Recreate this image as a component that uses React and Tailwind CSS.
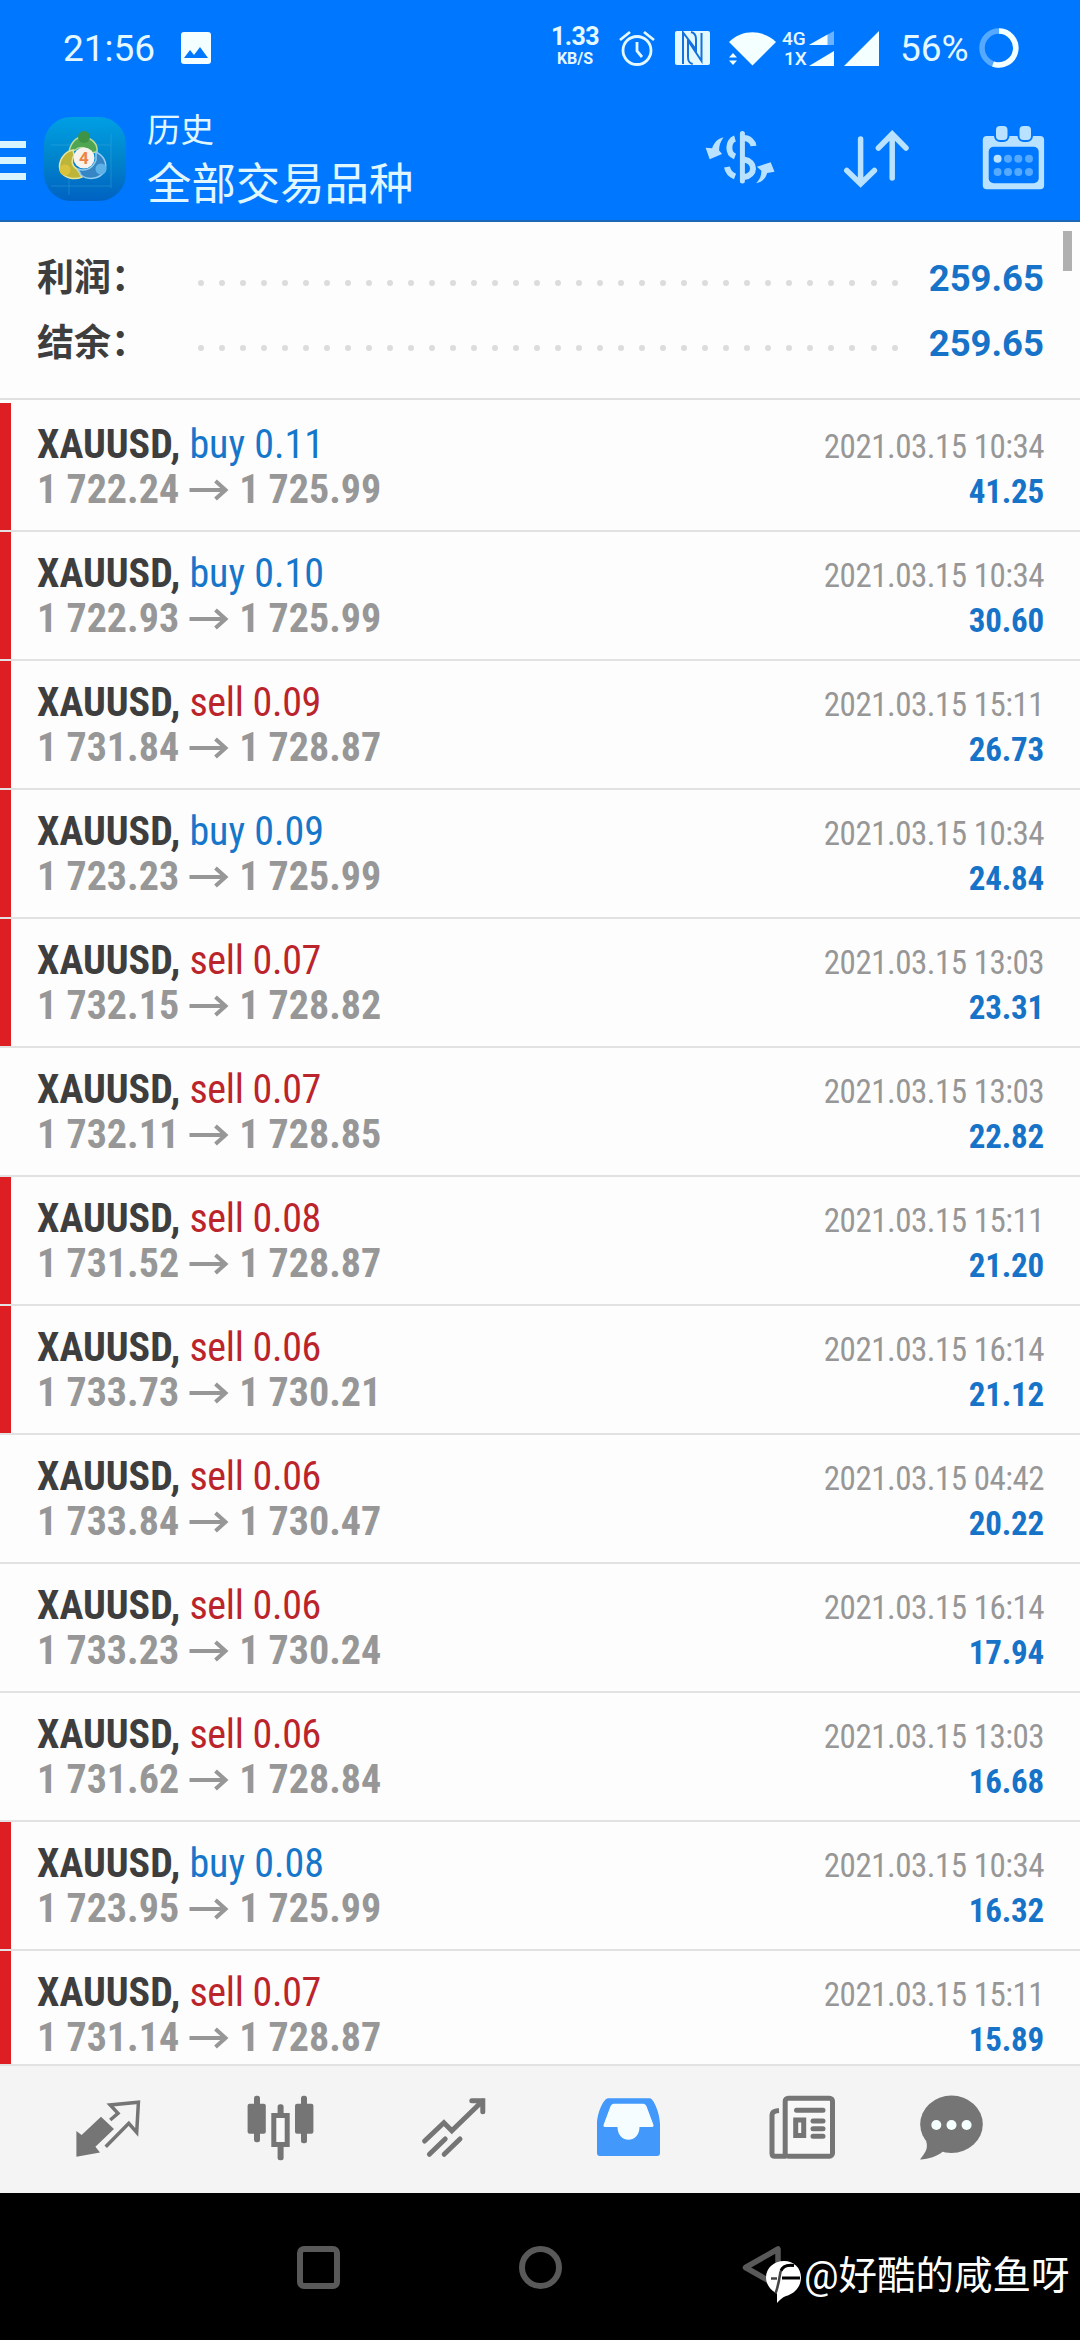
import React from 'react'

const deals = [
    { side: 'buy', volume: '0.11', open: '1 722.24', close: '1 725.99', time: '2021.03.15 10:34', profit: '41.25', marked: true },
    { side: 'buy', volume: '0.10', open: '1 722.93', close: '1 725.99', time: '2021.03.15 10:34', profit: '30.60', marked: true },
    { side: 'sell', volume: '0.09', open: '1 731.84', close: '1 728.87', time: '2021.03.15 15:11', profit: '26.73', marked: true },
    { side: 'buy', volume: '0.09', open: '1 723.23', close: '1 725.99', time: '2021.03.15 10:34', profit: '24.84', marked: true },
    { side: 'sell', volume: '0.07', open: '1 732.15', close: '1 728.82', time: '2021.03.15 13:03', profit: '23.31', marked: true },
    { side: 'sell', volume: '0.07', open: '1 732.11', close: '1 728.85', time: '2021.03.15 13:03', profit: '22.82', marked: false },
    { side: 'sell', volume: '0.08', open: '1 731.52', close: '1 728.87', time: '2021.03.15 15:11', profit: '21.20', marked: true },
    { side: 'sell', volume: '0.06', open: '1 733.73', close: '1 730.21', time: '2021.03.15 16:14', profit: '21.12', marked: true },
    { side: 'sell', volume: '0.06', open: '1 733.84', close: '1 730.47', time: '2021.03.15 04:42', profit: '20.22', marked: false },
    { side: 'sell', volume: '0.06', open: '1 733.23', close: '1 730.24', time: '2021.03.15 16:14', profit: '17.94', marked: false },
    { side: 'sell', volume: '0.06', open: '1 731.62', close: '1 728.84', time: '2021.03.15 13:03', profit: '16.68', marked: false },
    { side: 'buy', volume: '0.08', open: '1 723.95', close: '1 725.99', time: '2021.03.15 10:34', profit: '16.32', marked: true },
    { side: 'sell', volume: '0.07', open: '1 731.14', close: '1 728.87', time: '2021.03.15 15:11', profit: '15.89', marked: true },
]

const StatusBar = () => (
    <div className="flex h-24 items-center pl-[63px] text-[#e4f8ff]">
        <span className="w-[93px] text-[37px] leading-none whitespace-nowrap">21:56</span>
        <svg className="ml-[25px] h-8 w-[30px]" viewBox="0 0 30 32">
            <rect width="30" height="32" rx="3" fill="#f4ffff" />
            <path d="M3 26 9 18l4 5 6-8 8 11z" fill="#0077ff" />
        </svg>
        <div className="-mt-1 ml-[340px] flex w-[48px] flex-col items-center font-bold">
            <span className="text-[25px] leading-[26px] tracking-tight">1.33</span>
            <span className="text-[16px] leading-[18px]">KB/S</span>
        </div>
        <svg className="ml-5 h-9 w-9" viewBox="0 0 36 36" fill="none" stroke="currentColor" strokeWidth="2.8">
            <circle cx="18" cy="20.5" r="14" />
            <path d="M18 12v9l5 6M1 10l10-8M35 10 25 2" />
        </svg>
        <svg className="ml-5 h-[34px] w-[35px]" viewBox="0 0 35 34">
            <rect width="35" height="34" rx="2" fill="#e4f8ff" />
            <path d="M8 33V1.500l13 17V8c0-4-1-6-5-7M17.700 33c-4-1-4.700-3-4.700-7V9.500L26.500 30V2" fill="none" stroke="#1372dd" strokeWidth="2" />
        </svg>
        <svg className="ml-[19px] h-[35px] w-[47px]" viewBox="0 0 47 35" fill="#f4ffff">
            <path d="M0 11C13-2 34-2 47 11L23.500 34.500z" />
            <path d="M0 26.500 4 22l4 4.500zM0 29.500h8L4 34z" />
        </svg>
        <div className="ml-1.5 flex w-[52px] flex-col gap-[3px]">
            <div className="flex h-[17px] items-center">
                <span className="w-[27px] text-[19px] font-medium leading-none">4G</span>
                <svg className="h-[14px] w-[25px]" viewBox="0 0 25 14">
                    <path d="M0 14 25 0v14z" fill="#6bb2ff" />
                    <path d="M0 14 18.500 3.500V14z" fill="#f4ffff" />
                </svg>
            </div>
            <div className="flex h-[17px] items-center">
                <span className="w-[27px] pl-0.5 text-[19px] font-medium leading-none">1X</span>
                <svg className="h-[15px] w-[25px]" viewBox="0 0 25 15"><path d="M0 15 25 0v15z" fill="#f4ffff" /></svg>
            </div>
        </div>
        <svg className="ml-2.5 h-[35px] w-[35px]" viewBox="0 0 35 35"><path d="M0 35 35 0v35z" fill="#f4ffff" /></svg>
        <span className="ml-[21px] w-[68px] text-[37px] leading-none whitespace-nowrap">56%</span>
        <svg className="ml-[11px] h-10 w-10" viewBox="0 0 40 40" fill="none" strokeWidth="5.500">
            <circle cx="20" cy="20" r="17" stroke="#55aaff" />
            <path d="M20 3a17 17 0 1 1-6 33" stroke="#f4ffff" />
        </svg>
    </div>
)

const AppLogo = () => (
    <svg className="h-[86px] w-[84px]" viewBox="0 0 84 86">
        <defs>
            <linearGradient id="tile" x1="0" y1="0" x2="0" y2="1">
                <stop offset="0" stopColor="#009fe4" />
                <stop offset=".5" stopColor="#0084cc" />
                <stop offset="1" stopColor="#0062c2" />
            </linearGradient>
        </defs>
        <rect x="1" y="1" width="82" height="84" rx="27" fill="url(#tile)" />
        <path d="M8 29h60M26 45v34M8 70h60M68 18v54" stroke="#55b4e0" strokeWidth=".8" opacity=".4" />
        <path d="M26 36c2-12 10-16 15-15 8 1 14 7 13 15l-7 1c-3-6-10-7-15-3z" fill="#4fa552" stroke="#b9dc98" strokeWidth="1.500" />
        <path d="M30 34c-10 2-15 12-13 20 4 9 15 10 22 7l-5-8c-5-3-6-8-3-14z" fill="#bdb53a" stroke="#e6e29a" strokeWidth="1.500" />
        <path d="M53 36c8 4 11 11 9 19-6 9-18 9-24 4l-3-6c8 3 15-1 18-9z" fill="#3686c6" stroke="#92cbee" strokeWidth="1.500" />
        <circle cx="41" cy="21" r="6" fill="#3d9447" />
        <circle cx="22" cy="54" r="5.500" fill="#d9c33c" />
        <circle cx="58" cy="53" r="5.500" fill="#5fb2e8" />
        <circle cx="41" cy="42" r="10.500" fill="#f7f3ec" />
        <text x="41" y="48" textAnchor="middle" fontSize="17" fontWeight="700" fill="#ee8244">4</text>
    </svg>
)

const Header = () => (
    <header className="h-[222px] border-b-2 border-[#1b67b5] bg-[#0077ff]">
        <StatusBar />
        <div className="flex h-[124px] items-start">
            <div className="mt-[45px] flex w-[26px] flex-col gap-[9px]">
                <div className="h-[7px] bg-[#d8f4ff]" />
                <div className="h-[7px] bg-[#d8f4ff]" />
                <div className="h-[7px] bg-[#d8f4ff]" />
            </div>
            <div className="ml-[17px] mt-5"><AppLogo /></div>
            <div className="ml-5 mt-[15px] flex w-[554px] flex-col text-[#e0f7ff]">
                <span className="text-[33.500px] leading-[40px]">历史</span>
                <span className="mt-[5px] text-[44.400px] leading-[58px]">全部交易品种</span>
            </div>
            <svg className="mt-[30px] h-16 w-20 text-[#b8e2ff]" viewBox="0 0 80 64" fill="none" stroke="currentColor" strokeWidth="6">
                <path d="M41.400 7.500v47.500" strokeWidth="5" strokeLinecap="round" />
                <path d="M34 12.500c-7 2-8 15 0 18M43 12c5 0 9 4 9.500 8M43 33.500c12 2 12 16 0 17.500M26 41c1 5 4 8 8 9.500" />
                <path d="M4.600 21.700 8.700 33.300 21.100 28l-3-3.500c0-5 1.500-9 4.400-13.200-6 1.500-9 5-11.400 11z" fill="currentColor" stroke="none" />
                <path d="m73.500 45.700-3.800-9.400-13.800 4.400 4.500 4c0 5-1.500 8.500-5.200 12.600 6-1.500 9.500-5 11-10.300z" fill="currentColor" stroke="none" />
            </svg>
            <svg className="ml-[60px] mt-[30px] h-16 w-[70px] text-[#b8e2ff]" viewBox="0 0 70 64" fill="none" stroke="currentColor" strokeWidth="5.500" strokeLinecap="round">
                <path d="M19.600 13v44M5.800 44.500l13.800 13.500 13.800-13.500M51.200 52V9M37.400 22 51.200 8l13.800 14" />
            </svg>
            <svg className="ml-[70px] mt-7 h-[68px] w-[66px]" viewBox="0 0 66 68">
                <rect x="1.800" y="12" width="61.300" height="53.300" rx="4" fill="#b8e2ff" />
                <rect x="7.700" y="22.700" width="50" height="36.600" rx="5" fill="#0077ff" />
                <rect x="14" y="1" width="13.500" height="16" rx="5" fill="#b8e2ff" stroke="#0077ff" strokeWidth="2" />
                <rect x="37.500" y="1" width="13.500" height="16" rx="5" fill="#b8e2ff" stroke="#0077ff" strokeWidth="2" />
                <g fill="#55aaff">
                    <circle cx="16.600" cy="34.700" r="4" fill="#b8e2ff" />
                    <circle cx="27" cy="34.700" r="4" />
                    <circle cx="37.300" cy="34.700" r="4" />
                    <circle cx="48" cy="34.700" r="4" />
                    <circle cx="16.600" cy="48" r="4" />
                    <circle cx="27" cy="48" r="4" />
                    <circle cx="37.300" cy="48" r="4" />
                    <circle cx="48" cy="48" r="4" />
                </g>
            </svg>
        </div>
    </header>
)

const SummaryRow = ({ label, value }) => (
    <div className="flex h-[65px] items-center">
        <span className="w-[161px] text-[37px] leading-none font-bold text-[#3e3e3e]">{label}</span>
        <div className="mt-2 flex w-[700px] justify-between">
            {Array.from({ length: 34 }, (_, i) => (
                <span key={i} className="size-1.5 rounded-full bg-[#dcdcdc]" />
            ))}
        </div>
        <span className="flex-1 pt-px text-right text-[36.500px] leading-none font-bold text-[#1673c8]">{value}</span>
    </div>
)

const DealRow = ({ deal }) => (
    <li className="flex h-[129px] shrink-0 border-b-[2.5px] border-[#e2e2e2] font-['Roboto_Condensed','Roboto',sans-serif]">
        <div className={`w-[11px] ${deal.marked ? 'bg-[#dd1f24]' : ''}`} />
        <div className="flex flex-1 justify-between pl-[26px] pr-9 pt-[19px] whitespace-nowrap">
            <div className="flex flex-col text-[40px] leading-[45px]">
                <span>
                    <b className="text-[#3e3e3e]">XAUUSD,</b>{' '}
                    <span className={deal.side === 'buy' ? 'text-[#1676ca]' : 'tracking-[-0.3px] text-[#bb242b]'}>{deal.side} {deal.volume}</span>
                </span>
                <span className="flex items-center font-bold text-[#979797]">
                    {deal.open}
                    <svg className="mx-2.5 h-6 w-10" viewBox="0 0 40 24" fill="none" stroke="currentColor" strokeWidth="4">
                        <path d="M.5 12h36M26.500 3l10 9-10 9" />
                    </svg>
                    {deal.close}
                </span>
            </div>
            <div className="flex flex-col items-end pt-0.5 text-[33px] leading-[45px]">
                <span className="tracking-[-0.5px] text-[#979797]">{deal.time}</span>
                <span className="tracking-[-0.2px] font-bold text-[#1673c8]">{deal.profit}</span>
            </div>
        </div>
    </li>
)

const TabBar = () => (
    <nav className="flex h-[129px] items-start border-t-2 border-[#e2e2e2] bg-[#f4f4f4] pl-[74px] pt-[29px] text-[#757575]">
        <svg className="h-[66px] w-[67px]" viewBox="0 0 67 66">
            <path d="M2.400 36 7.600 40 27 21.700 40 34 21.400 51.700 26 57.500 2.400 61.700z" fill="currentColor" />
            <path d="M36.200 25 44 18.300 36.200 10 64.400 7.300 62.700 37.300 54.800 28.300 31.700 51.700" fill="none" stroke="currentColor" strokeWidth="3.500" />
        </svg>
        <svg className="ml-[106px] h-[66px] w-[67px]" viewBox="0 0 67 66" fill="currentColor">
            <rect x=".6" y="8.700" width="18.200" height="30" rx="2" />
            <rect x="7" y=".7" width="6" height="46.500" rx="2.500" />
            <rect x="48" y="8.700" width="18.400" height="30" rx="2" />
            <rect x="54" y=".7" width="6" height="47.500" rx="2.500" />
            <rect x="30.600" y="9.300" width="6" height="56" rx="2.500" />
            <rect x="26.800" y="20.500" width="13.400" height="29" fill="#f8f8f8" stroke="currentColor" strokeWidth="5" />
        </svg>
        <svg className="ml-[107px] h-[66px] w-[67px]" viewBox="0 0 67 66" fill="none" stroke="currentColor" strokeWidth="5" strokeLinecap="round">
            <path d="M3.600 46 22.900 27.700l7.900 8L61.800 5.700M50.800 5.700h11v11M24.200 44 8.400 59.300M39 44 23.200 59.300" />
        </svg>
        <svg className="ml-[108px] h-[66px] w-[66px]" viewBox="0 0 66 66">
            <path d="M12 3.300h42c3 0 10 14 10 26V58q0 3-3 3H4q-3 0-3-3V29.300c0-12 7-26 11-26z" fill="#4298fb" />
            <path d="M17.500 8.700h30q2 0 3 2.500L57.500 30q.5 2-1.500 2H43.500c0 17-22 17-22 0H9q-2 0-1.500-2l7-18.800q1-2.500 3-2.500z" fill="#f6fdff" />
        </svg>
        <svg className="ml-[107px] h-[66px] w-[68px]" viewBox="0 0 68 66" fill="none" stroke="currentColor" strokeWidth="5">
            <rect x="16.200" y="3.200" width="47.300" height="58" rx="3" fill="#f8f8f8" />
            <path d="M17 61.200H6q-3 0-3-3V20q0-4 7-4.500" />
            <path d="M27.500 15.300h26.500M44 26h10M44 33.700h10M44 41.300h10" strokeLinecap="round" />
            <rect x="26.700" y="25" width="8" height="15.500" />
        </svg>
        <svg className="ml-[81px] h-[66px] w-[66px]" viewBox="0 0 66 66" fill="currentColor">
            <ellipse cx="33.500" cy="29.300" rx="31.300" ry="28.700" />
            <path d="M8 46c3 8-2 13-6 18.500 9-.5 17-3 23-8z" />
            <g fill="#f4ffff">
                <circle cx="18.300" cy="30" r="5" />
                <circle cx="33.500" cy="30" r="5" />
                <circle cx="48.600" cy="30" r="5" />
            </g>
        </svg>
    </nav>
)

const SystemNav = () => (
    <div className="relative flex h-[147px] items-start bg-black pt-[53px] text-[#595959]">
        <div className="ml-[297px] size-[43px] rounded-[7px] border-[6px] border-current" />
        <div className="ml-[179px] size-[43px] rounded-full border-[6px] border-current" />
        <svg className="ml-[180px] h-[43px] w-[40px]" viewBox="0 0 40 43" fill="none" stroke="currentColor" strokeWidth="5.500" strokeLinejoin="round">
            <path d="M3.500 21.500 36 3v37z" />
        </svg>
        {/* user signature, overlaps the back button */}
        <div className="absolute left-[766px] top-14 flex items-center text-white">
            <svg className="mt-3 h-[42px] w-[36px]" viewBox="0 0 36 42">
                <path d="M18 0C28 0 35 7 35 16.500S28 33 20 35c-4 1.500-6 4-9 7V32.500C4 29 0 23 0 16.500 0 7 8 0 18 0z" fill="#fff" />
                <path d="M28 4.500c-9-1.500-13 2-14 9-1 7-2 12-4.500 19M5 17.500h6" fill="none" stroke="#444" strokeWidth="2.500" />
                <path d="M28 4.500c-7-1-11 1-13 5M16 17h18" fill="none" stroke="#000" strokeWidth="3" />
            </svg>
            <span className="ml-0.5 text-[38.500px] leading-[54px] whitespace-nowrap">@好酷的咸鱼呀</span>
        </div>
    </div>
)

const App = () => (
    <div className="flex h-[2340px] w-[1080px] flex-col overflow-hidden bg-[#fdfdfd] font-['Roboto','Noto_Sans_CJK_SC',sans-serif]">
        <Header />
        <section className="relative h-[181px] pl-[37px] pr-9 pt-6">
            <SummaryRow label="利润：" value="259.65" />
            <SummaryRow label="结余：" value="259.65" />
            <div className="absolute right-[8px] top-[9px] h-10 w-[9px] bg-[#b0b0b0]" />
            <div className="absolute left-0 top-[176px] h-[2px] w-full bg-[#e0e0e0]" />
        </section>
        <ul className="flex h-[1661px] flex-col overflow-hidden">
            {deals.map((deal, i) => <DealRow key={i} deal={deal} />)}
        </ul>
        <TabBar />
        <SystemNav />
    </div>
)

export default App
